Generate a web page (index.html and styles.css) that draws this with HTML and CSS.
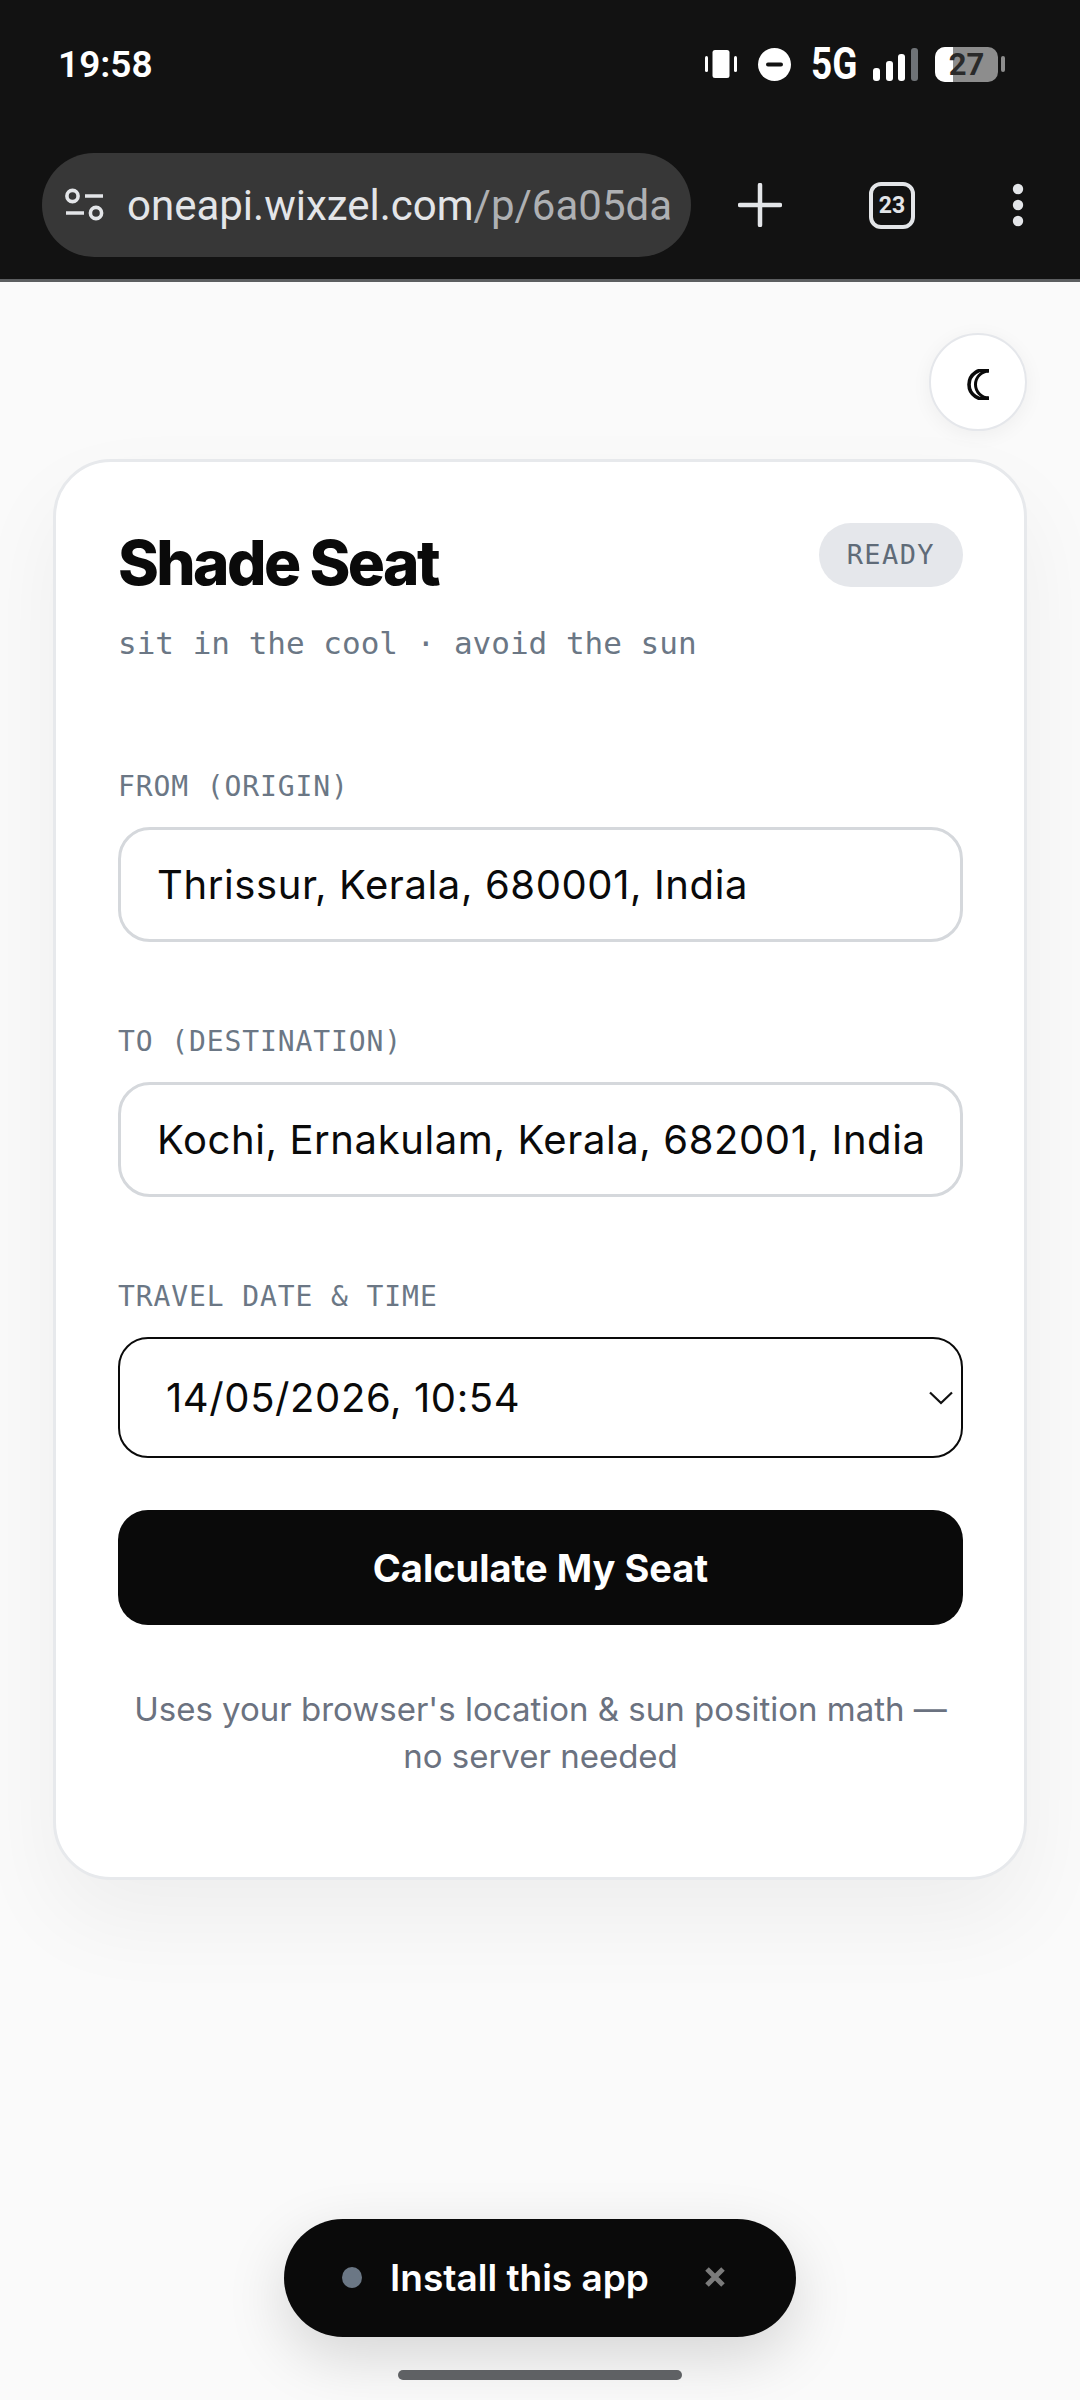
FILE: index.html
```html
<!DOCTYPE html>
<html lang="en">
<head>
    <meta charset="UTF-8">
    <meta name="viewport" content="width=device-width, initial-scale=1.0">
    <title>Shade Seat</title>
    <link rel="stylesheet" href="styles.css">
</head>
<body>

    <!-- Phone + browser chrome -->
    <header class="chrome">
        <div class="statusBar">
            <span class="clock">19:58</span>
            <div class="statusIcons">
                <svg class="icoVibrate" width="32" height="30" viewBox="0 0 32 30">
                    <rect x="7.5" y="1" width="17" height="28" rx="2.5" fill="#fff"/>
                    <rect x="0" y="7" width="3" height="16" rx="1.5" fill="#fff"/>
                    <rect x="29" y="7" width="3" height="16" rx="1.5" fill="#fff"/>
                </svg>
                <svg class="icoDnd" width="33" height="33" viewBox="0 0 33 33">
                    <circle cx="16.5" cy="16.5" r="16.5" fill="#fff"/>
                    <rect x="8" y="14.5" width="17" height="4" rx="2" fill="#121212"/>
                </svg>
                <span class="netType">5G</span>
                <svg class="icoSignal" width="46" height="33" viewBox="0 0 46 33">
                    <rect x="0" y="20" width="7" height="13" rx="3" fill="#fff"/>
                    <rect x="13" y="13" width="7" height="20" rx="3" fill="#fff"/>
                    <rect x="25" y="6" width="7" height="27" rx="3" fill="#fff"/>
                    <rect x="38" y="0" width="7" height="33" rx="3" fill="#6f7377"/>
                </svg>
                <div class="battery">
                    <div class="batteryBody"><div class="batteryFill"></div><span class="batteryText">27</span></div>
                    <div class="batteryTip"></div>
                </div>
            </div>
        </div>
        <div class="toolBar">
            <div class="urlBar">
                <svg class="icoTune" width="39" height="34" viewBox="0 0 39 34" fill="none" stroke="#e3e5e8" stroke-width="3.6">
                    <circle cx="7.5" cy="8" r="5.6"/>
                    <path d="M20 8h18"/>
                    <circle cx="31" cy="25" r="5.6"/>
                    <path d="M1 25h18"/>
                </svg>
                <div class="urlText"><span class="urlHost">oneapi.wixzel.com</span><span class="urlPath">/p/6a05da</span></div>
            </div>
            <svg class="icoPlus" width="44" height="44" viewBox="0 0 44 44" stroke="#e3e5e8" stroke-width="4.5" stroke-linecap="round">
                <path d="M22 2v40M2 22h40"/>
            </svg>
            <div class="tabCount">23</div>
            <svg class="icoMore" width="12" height="44" viewBox="0 0 12 44" fill="#e3e5e8">
                <circle cx="6" cy="6" r="5.2"/>
                <circle cx="6" cy="22" r="5.2"/>
                <circle cx="6" cy="38" r="5.2"/>
            </svg>
        </div>
    </header>

    <main class="page">
        <div class="themeRow">
            <button class="themeBtn" type="button" aria-label="Dark mode">
                <svg class="icoMoon" width="22" height="31" viewBox="0 0 22 31" fill="none" stroke="#0a0a0a">
                    <path d="M22 2A14.55 14.55 0 1 0 22 29" stroke-width="3.6"/>
                    <path d="M22 2A13.5 13.5 0 1 0 22 29" stroke-width="3"/>
                </svg>
            </button>
        </div>

        <section class="card">
            <div class="cardHead">
                <div>
                    <h1 class="title">Shade Seat</h1>
                    <p class="tagline">sit in the cool · avoid the sun</p>
                </div>
                <span class="statusPill">READY</span>
            </div>

            <div class="field">
                <label class="fieldLabel">FROM (ORIGIN)</label>
                <div class="textBox">Thrissur, Kerala, 680001, India</div>
            </div>

            <div class="field">
                <label class="fieldLabel">TO (DESTINATION)</label>
                <div class="textBox">Kochi, Ernakulam, Kerala, 682001, India</div>
            </div>

            <div class="field dateField">
                <label class="fieldLabel">TRAVEL DATE &amp; TIME</label>
                <div class="dateBox">
                    <span>14/05/2026, 10:54</span>
                    <svg class="icoChevron" width="24" height="14" viewBox="0 0 24 14" fill="none" stroke="#111" stroke-width="2.2">
                        <path d="M1 1.5l11 10.5L23 1.5"/>
                    </svg>
                </div>
            </div>

            <button class="calcBtn" type="button">Calculate My Seat</button>

            <p class="note">Uses your browser's location &amp; sun position math — no server needed</p>
        </section>
    </main>

    <!-- Overlays -->
    <div class="installPill">
        <span class="installDot"></span>
        <span class="installText">Install this app</span>
        <svg class="installClose" width="20" height="20" viewBox="0 0 20 20" stroke="#7b7b7b" stroke-width="5">
            <path d="M2 2l16 16M18 2L2 18"/>
        </svg>
    </div>
    <div class="homeBar"></div>

</body>
</html>
```

FILE: styles.css
```css
html, body {
    margin: 0;
    padding: 0;
}

body {
    position: relative;
    width: 1080px;
    height: 2400px;
    overflow: hidden;
    background-color: #fafafa;
    font-family: "Inter", "Noto Sans", sans-serif;
}

/* Browser chrome */
.chrome {
    height: 279px;
    background-color: #121212;
    border-bottom: 3px solid #5c5e60;
    display: flex;
    flex-direction: column;
}

.statusBar {
    height: 153px;
    padding: 46px 75px 0 58px;
    box-sizing: border-box;
    display: flex;
    justify-content: space-between;
    align-items: flex-start;
}

.clock {
    color: #fff;
    font-family: "Roboto", sans-serif;
    font-size: 37px;
    font-weight: 600;
    line-height: 38px;
}

.statusIcons {
    display: flex;
    align-items: center;
    height: 36px;
}

.icoVibrate {
    margin-right: 21px;
}

.icoDnd {
    margin-right: 20px;
}

.netType {
    color: #fff;
    font-family: "Roboto", sans-serif;
    font-size: 45px;
    font-weight: 700;
    line-height: 36px;
    width: 47px;
    margin-right: 15px;
    transform: scaleX(0.82);
    transform-origin: left center;
}

.icoSignal {
    margin-right: 16px;
}

.battery {
    display: flex;
    align-items: center;
}

.batteryBody {
    position: relative;
    width: 63px;
    height: 35px;
    border-radius: 10px;
    background-color: #8d8d8d;
    overflow: hidden;
    text-align: center;
}

.batteryFill {
    position: absolute;
    left: 0;
    top: 0;
    width: 18px;
    height: 35px;
    background-color: #fff;
}

.batteryText {
    position: relative;
    color: #2a2a2a;
    font-family: "Roboto", sans-serif;
    font-size: 31px;
    font-weight: 700;
    line-height: 36px;
}

.batteryTip {
    width: 4px;
    height: 16px;
    margin-left: 3px;
    border-radius: 2px;
    background-color: #8d8d8d;
}

.toolBar {
    display: flex;
    align-items: center;
    height: 104px;
    padding-left: 42px;
}

.urlBar {
    width: 649px;
    height: 104px;
    box-sizing: border-box;
    padding: 0 20px 0 23px;
    border-radius: 52px;
    background-color: #373737;
    display: flex;
    align-items: center;
    overflow: hidden;
}

.icoTune {
    flex-shrink: 0;
    margin-right: 23px;
}

.urlText {
    font-family: "Roboto", sans-serif;
    font-size: 42px;
    white-space: nowrap;
}

.urlHost {
    color: #e3e5e8;
}

.urlPath {
    color: #aeb0b3;
}

.icoPlus {
    margin-left: 47px;
    flex-shrink: 0;
}

.tabCount {
    width: 46px;
    height: 47px;
    margin-left: 87px;
    flex-shrink: 0;
    box-sizing: border-box;
    border: 4px solid #e3e5e8;
    border-radius: 12px;
    color: #e3e5e8;
    font-family: "Roboto", sans-serif;
    font-size: 23px;
    font-weight: 700;
    display: flex;
    align-items: center;
    justify-content: center;
}

.icoMore {
    margin-left: 97px;
    flex-shrink: 0;
}

/* Page */
.page {
    padding: 51px 53px 0 53px;
}

.themeRow {
    display: flex;
    justify-content: flex-end;
}

.themeBtn {
    width: 98px;
    height: 98px;
    padding: 4px 0 0 0;
    border: 2px solid #e5e7eb;
    border-radius: 50%;
    background-color: #fff;
    box-shadow: 0 4px 20px rgba(0, 0, 0, 0.05);
    display: flex;
    align-items: center;
    justify-content: center;
}

.card {
    margin-top: 28px;
    height: 1421px;
    box-sizing: border-box;
    padding: 65px 61px 0 62px;
    background-color: #fff;
    border: 3px solid #e7e9ec;
    border-radius: 58px;
    box-shadow: 0 40px 90px rgba(0, 0, 0, 0.05);
}

.cardHead {
    display: flex;
    justify-content: space-between;
    align-items: flex-start;
    margin-bottom: 110px;
}

.title {
    margin: 0;
    color: #0a0a0a;
    font-size: 62px;
    font-weight: 800;
    line-height: 72px;
    letter-spacing: -2.6px;
}

.tagline {
    margin: 26px 0 0;
    color: #6b7785;
    font-family: "DejaVu Sans Mono", monospace;
    font-size: 31px;
    line-height: 36px;
}

.statusPill {
    margin-top: -4px;
    padding: 0 28px;
    height: 64px;
    border-radius: 32px;
    background-color: #e5e7eb;
    color: #5f6b78;
    font-family: "DejaVu Sans Mono", monospace;
    font-size: 27px;
    line-height: 64px;
    letter-spacing: 1.4px;
}

.field {
    margin-bottom: 84px;
}

.dateField {
    margin-bottom: 52px;
}

.fieldLabel {
    display: block;
    margin-bottom: 24px;
    color: #6b7785;
    font-family: "DejaVu Sans Mono", monospace;
    font-size: 28px;
    line-height: 32px;
    letter-spacing: 0.9px;
}

.textBox {
    height: 115px;
    box-sizing: border-box;
    padding: 0 36px;
    border: 3px solid #d5d8dc;
    border-radius: 32px;
    background-color: #fff;
    color: #0a0a0a;
    font-size: 40px;
    letter-spacing: 0.6px;
    line-height: 109px;
    white-space: nowrap;
}

.dateBox {
    height: 121px;
    box-sizing: border-box;
    padding: 0 8px 0 46px;
    border: 2px solid #0a0a0a;
    border-radius: 30px;
    background-color: #fff;
    color: #0a0a0a;
    font-size: 40px;
    letter-spacing: 0.6px;
    display: flex;
    justify-content: space-between;
    align-items: center;
}

.calcBtn {
    display: block;
    width: 100%;
    height: 115px;
    border: none;
    border-radius: 30px;
    background-color: #0a0a0a;
    color: #fff;
    font-family: "Inter", sans-serif;
    font-size: 38px;
    font-weight: 700;
}

.note {
    margin: 61px 0 0;
    color: #6b7280;
    font-size: 33px;
    line-height: 47px;
    text-align: center;
}

/* Overlays */
.installPill {
    position: absolute;
    left: 284px;
    top: 2219px;
    width: 512px;
    height: 118px;
    box-sizing: border-box;
    padding: 0 0 2px 58px;
    border-radius: 59px;
    background-color: #0a0a0a;
    box-shadow: 0 20px 60px rgba(0, 0, 0, 0.15);
    display: flex;
    align-items: center;
}

.installDot {
    width: 20px;
    height: 21px;
    border-radius: 50%;
    background-color: #6b7785;
}

.installText {
    margin-left: 28px;
    color: #fff;
    font-size: 37px;
    font-weight: 600;
}

.installClose {
    margin-left: 56px;
}

.homeBar {
    position: absolute;
    left: 398px;
    top: 2370px;
    width: 284px;
    height: 10px;
    border-radius: 5px;
    background-color: #5f6164;
}
```
